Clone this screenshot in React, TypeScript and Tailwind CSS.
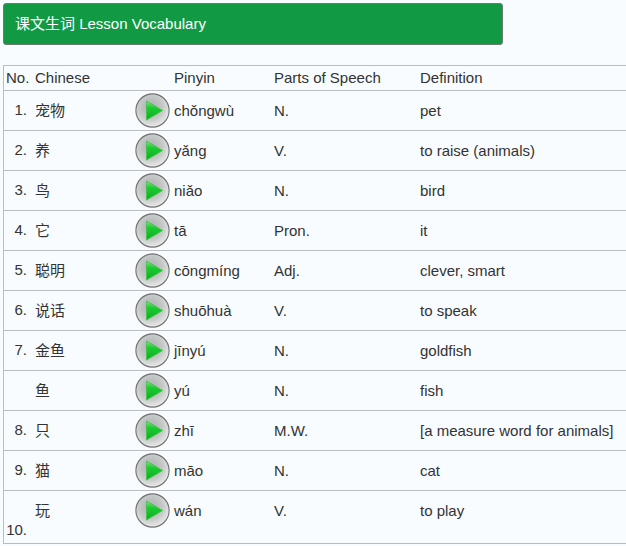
const rows = [
  { no: "1.", zh: "宠物", py: "chǒngwù", pos: "N.", def: "pet" },
  { no: "2.", zh: "养", py: "yǎng", pos: "V.", def: "to raise (animals)" },
  { no: "3.", zh: "鸟", py: "niǎo", pos: "N.", def: "bird" },
  { no: "4.", zh: "它", py: "tā", pos: "Pron.", def: "it" },
  { no: "5.", zh: "聪明", py: "cōngmíng", pos: "Adj.", def: "clever, smart" },
  { no: "6.", zh: "说话", py: "shuōhuà", pos: "V.", def: "to speak" },
  { no: "7.", zh: "金鱼", py: "jīnyú", pos: "N.", def: "goldfish" },
  { no: "", zh: "鱼", py: "yú", pos: "N.", def: "fish" },
  { no: "8.", zh: "只", py: "zhī", pos: "M.W.", def: "[a measure word for animals]" },
  { no: "9.", zh: "猫", py: "māo", pos: "N.", def: "cat" },
];

const PlayButton = () => (
  <svg width="35" height="35" viewBox="0 0 35 35" className="-mt-[2px] block shrink-0">
    <defs>
      <radialGradient id="disc" cx="45%" cy="40%" r="62%">
        <stop offset="0%" stopColor="#a9acac" />
        <stop offset="60%" stopColor="#c8caca" />
        <stop offset="100%" stopColor="#eceded" />
      </radialGradient>
      <linearGradient id="tri" x1="0" y1="0" x2="0" y2="1">
        <stop offset="0%" stopColor="#7fe67f" />
        <stop offset="35%" stopColor="#1dcb30" />
        <stop offset="100%" stopColor="#0bb021" />
      </linearGradient>
    </defs>
    <circle cx="17.5" cy="17.5" r="16.6" fill="url(#disc)" stroke="#6f6f6f" strokeWidth="1.1" />
    <path d="M11.5 8 L27.5 17.5 L11.5 27 Z" fill="url(#tri)" stroke="#3cc247" strokeWidth="0.8" strokeLinejoin="round" />
  </svg>
);

const Row = ({ no, zh, py, pos, def, last }: { no: string; zh: string; py: string; pos: string; def: string; last?: boolean }) => (
  <div className={`flex border-b border-[#b9bdc2] text-[15px] text-[#333333] ${last ? "h-[53px]" : "h-10"}`}>
    <div className={`flex w-[23px] justify-end ${last ? "items-end pb-[2px]" : "items-center"}`}>{no}</div>
    <div className="flex h-10 w-[108px] items-center self-start pl-2">{zh}</div>
    <div className="flex h-10 w-[139px] items-center gap-1 self-start">
      <PlayButton />
      <span>{py}</span>
    </div>
    <div className="flex h-10 w-[146px] items-center self-start">{pos}</div>
    <div className="flex h-10 items-center self-start">{def}</div>
  </div>
);

export default function App() {
  return (
    <div className="h-[546px] w-[626px] overflow-hidden bg-[#f8fcff] pl-[3px] pt-[3px] font-['Liberation_Sans','Noto_Sans_CJK_SC',sans-serif]">
      <div className="flex h-[42px] w-[500px] items-center rounded-[3px] border border-[#6b7b70] bg-[#119a43] pl-[11px] text-[15px] text-white">
        课文生词 Lesson Vocabulary
      </div>
      <div className="mt-5 border-l border-t border-[#b9bdc2]">
        <div className="flex h-[25px] items-center border-b border-[#b9bdc2] text-[15px] text-[#333333]">
          <div className="w-[31px] pl-[2px]">No.</div>
          <div className="w-[139px]">Chinese</div>
          <div className="w-[100px]">Pinyin</div>
          <div className="w-[146px]">Parts of Speech</div>
          <div>Definition</div>
        </div>
        {rows.map((r) => (
          <Row key={r.zh} {...r} />
        ))}
        <Row no="10." zh="玩" py="wán" pos="V." def="to play" last />
      </div>
    </div>
  );
}
